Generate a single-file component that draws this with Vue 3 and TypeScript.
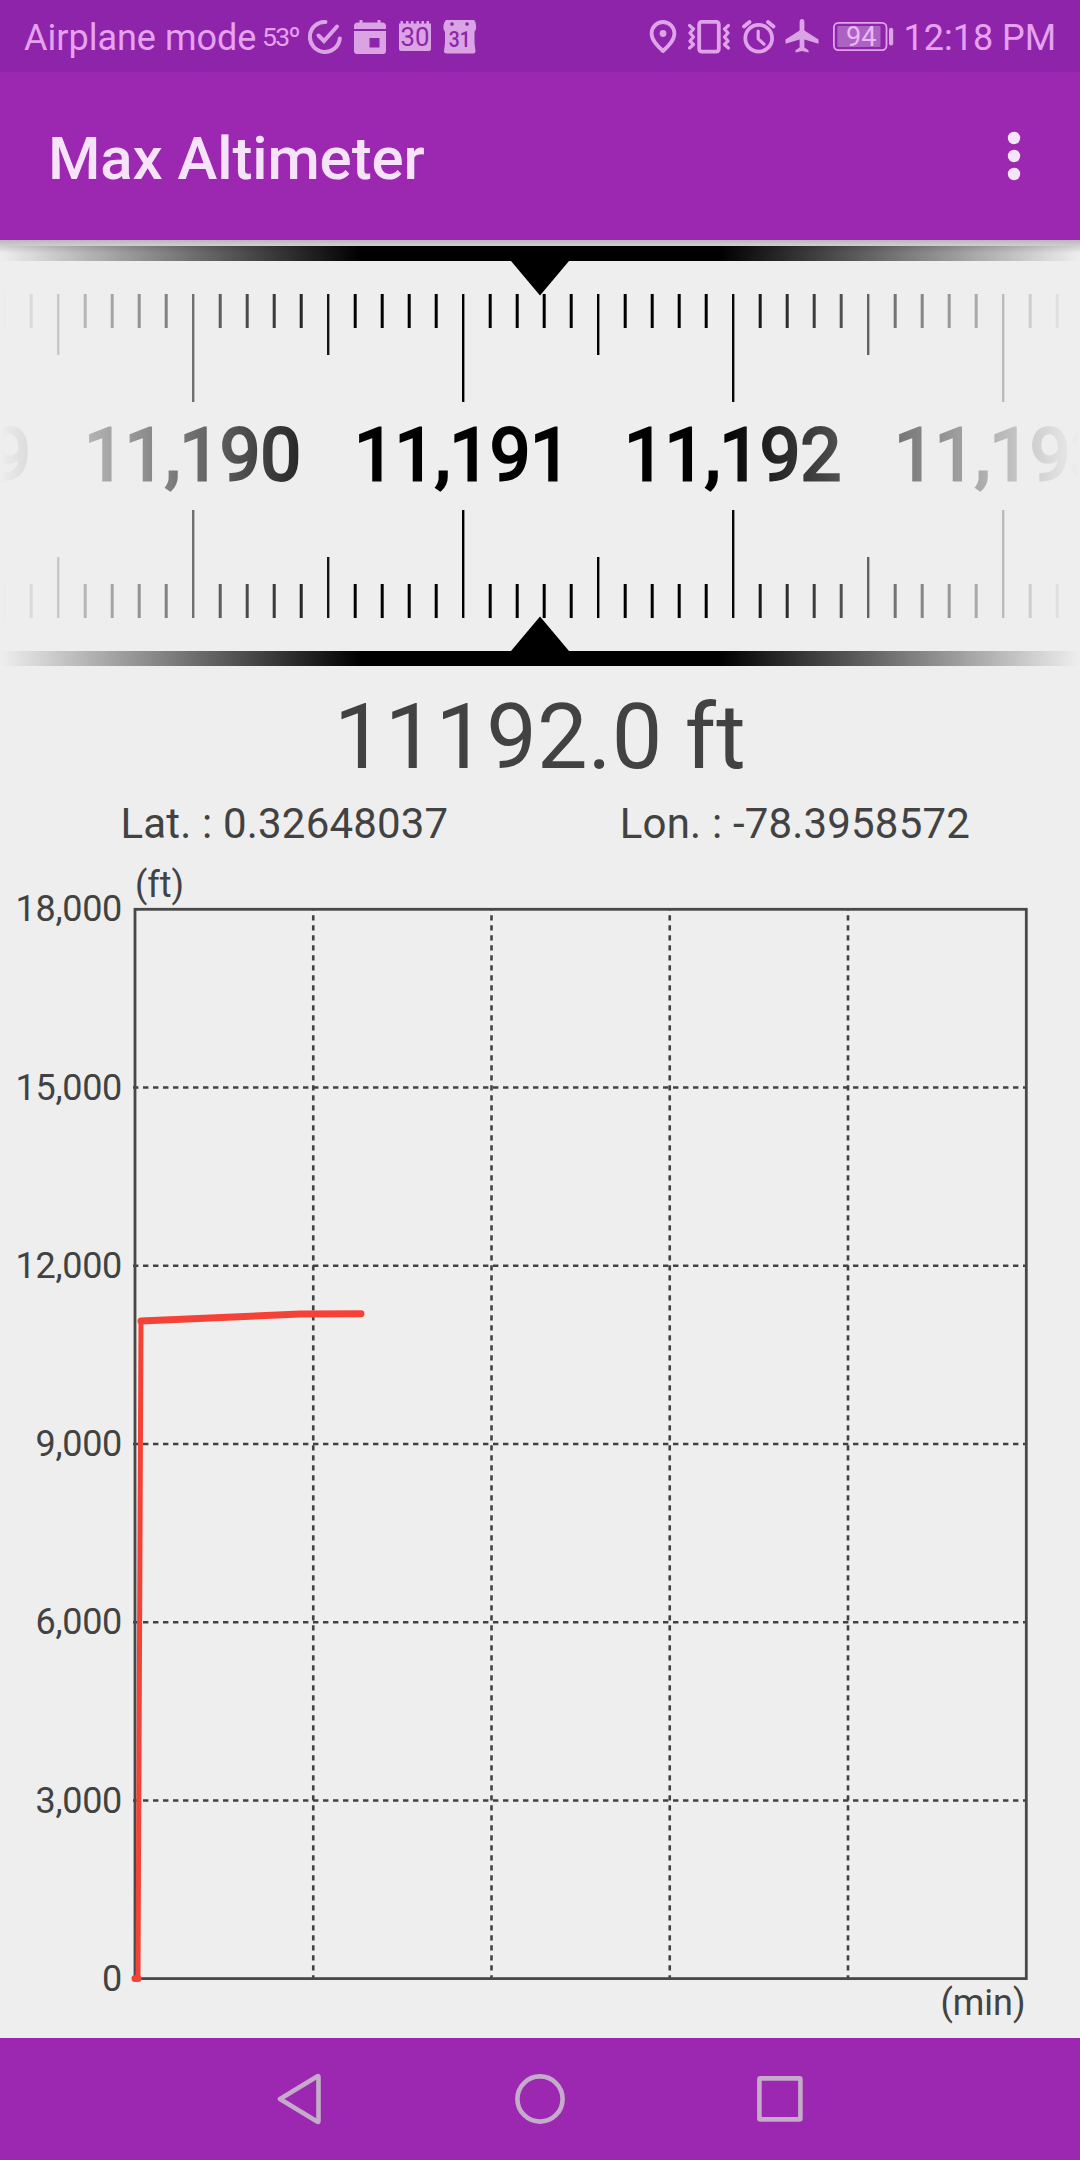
<script setup lang="ts">
interface Tick {
  x: number
  length: number
  width: number
}

const TICK_SPACING = 27
const FIRST_TICK = 4.2

// Every tenth tick is a whole foot, every fifth a half.
const ticks: Tick[] = Array.from({ length: 40 }, (_, i) => {
  const step = (i + 3) % 10
  const length = step === 0 ? 108 : step === 5 ? 61 : 34
  return { x: FIRST_TICK + i * TICK_SPACING, length, width: step % 5 === 0 ? 2.4 : 3 }
})

const marks = [11189, 11190, 11191, 11192, 11193].map((value, i) => ({
  label: value.toLocaleString('en-US'),
  x: -77.2 + i * 270,
}))

const CHART = { left: 135, right: 1026.3, top: 39.3, bottom: 1108.6 }
const STEP = 178.25

const rows = [18000, 15000, 12000, 9000, 6000, 3000, 0].map((value, i) => ({
  label: value.toLocaleString('en-US'),
  y: CHART.top + i * STEP,
}))
const columns = [1, 2, 3, 4].map((i) => CHART.left + i * STEP)
</script>

<template>
  <div class="screen">
    <header class="status">
      <span class="carrier">Airplane mode</span>
      <span class="temp">53º</span>
      <svg class="check" width="34" height="34" viewBox="0 0 34 34">
        <path d="M17.5 2 A15 15 0 1 0 31.8 18.5" />
        <path d="M10.5 15.5 L16 21 L29 6.5" />
      </svg>
      <svg class="cal" width="32" height="34" viewBox="0 0 32 34">
        <path d="M3 2.5H5.5V0H8.5V2.5H23.5V0H26.5V2.5H29Q32 3 32 6V9H0V6Q0 3 3 2.5Z" />
        <path fill-rule="evenodd" d="M0 11H32V31Q32 34 29 34H3Q0 34 0 31ZM15.5 18V27.5H25.5V18Z" />
      </svg>
      <svg class="cal30" width="32" height="34" viewBox="0 0 32 34">
        <path d="M0 3.5 H1.5V1H4V3.5H7V1H9.5V3.5H12V1H14.5V3.5H17.5V1H20V3.5H22.5V1H25V3.5H27.5V1H30V3.5H32V29Q32 31 30 31H2Q0 31 0 29Z" />
        <text x="16" y="26" text-anchor="middle" font-size="25" textLength="29" lengthAdjust="spacingAndGlyphs">30</text>
      </svg>
      <svg class="cal31" width="34" height="34" viewBox="0 0 34 34">
        <path fill-rule="evenodd" d="M3 0H31Q33 2 33 5V9L31.5 12V23L32.5 31Q32.5 33.5 30 33.5H4Q1 33.5 1 31L2 23V12L.5 9V5Q1 2 3 0ZM9 2.2A1.8 1.8 0 1 0 9.1 2.2ZM24 2.2A1.8 1.8 0 1 0 24.1 2.2Z" />
        <text x="16.7" y="26.8" text-anchor="middle" font-size="21.5" font-weight="500" textLength="22" lengthAdjust="spacingAndGlyphs">31</text>
      </svg>

      <svg class="pin" width="28" height="34" viewBox="0 0 28 34">
        <path class="line" d="M14 2A11.4 11.4 0 0 0 2.6 13.4C2.6 20 8 25.5 14 31C20 25.5 25.4 20 25.4 13.4A11.4 11.4 0 0 0 14 2Z" />
        <circle cx="14" cy="13.5" r="3.4" />
      </svg>
      <svg class="vibrate" width="42" height="34" viewBox="0 0 42 34">
        <rect class="line" x="11.2" y="1.8" width="19.6" height="29.8" rx="2.5" />
        <path class="line thin" d="M1.6 5.5 L5.5 9 L2 13 L5.5 17 L2 21 L5.5 24.5 L1.6 28M40.4 5.5 L36.5 9 L40 13 L36.5 17 L40 21 L36.5 24.5 L40.4 28" />
      </svg>
      <svg class="alarm" width="34" height="34" viewBox="0 0 34 34">
        <circle class="line" cx="16.7" cy="18.2" r="13.4" />
        <path class="line" d="M2 6.5 L7.5 2 M31.5 6.5 L26 2" />
        <path class="line thin" d="M16.2 11V18.8L22 24.2" />
      </svg>
      <svg class="plane" width="34" height="34" viewBox="0 0 34 34">
        <path d="M17 0C18.8 0 19.4 1.5 19.4 3V11.5L33.5 20.5V24.8L19.4 20.5V28.5L23.5 31.2V33.4L17 32L10.5 33.4V31.2L14.6 28.5V20.5L.5 24.8V20.5L14.6 11.5V3C14.6 1.5 15.2 0 17 0Z" />
      </svg>
      <svg class="battery" width="61" height="30" viewBox="0 0 61 30">
        <rect class="line" x=".9" y=".9" width="52.6" height="27.2" rx="4.5" stroke-width="1.8" />
        <rect class="charge" x="4.3" y="4" width="43.2" height="21" rx="1" />
        <rect x="56" y="5.8" width="4.2" height="17.6" rx="2" />
        <text x="28.2" y="24" text-anchor="middle" font-size="27">94</text>
      </svg>
      <span class="clock">12:18 PM</span>
    </header>

    <div class="appbar">
      <h1>Max Altimeter</h1>
      <svg width="14" height="50" viewBox="0 0 14 50">
        <circle cx="7" cy="7" r="6.2" />
        <circle cx="7" cy="25" r="6.2" />
        <circle cx="7" cy="43" r="6.2" />
      </svg>
    </div>

    <main>
      <svg class="gauge" width="1080" height="430" viewBox="0 240 1080 430">
        <defs>
          <linearGradient id="fade" gradientUnits="userSpaceOnUse" x1="0" y1="0" x2="1080" y2="0">
            <stop offset="0" stop-color="#000" stop-opacity="0" />
            <stop offset=".3333" stop-color="#000" />
            <stop offset=".6667" stop-color="#000" />
            <stop offset="1" stop-color="#000" stop-opacity="0" />
          </linearGradient>
          <linearGradient id="reveal" gradientUnits="userSpaceOnUse" x1="0" y1="0" x2="1080" y2="0">
            <stop offset="0" stop-color="#fff" stop-opacity="0" />
            <stop offset=".3333" stop-color="#fff" />
            <stop offset=".6667" stop-color="#fff" />
            <stop offset="1" stop-color="#fff" stop-opacity="0" />
          </linearGradient>
          <mask id="edges" maskUnits="userSpaceOnUse" x="0" y="400" width="1080" height="120">
            <rect x="0" y="400" width="1080" height="120" fill="url(#reveal)" />
          </mask>
          <linearGradient id="shade" x1="0" y1="0" x2="0" y2="1">
            <stop offset="0" stop-color="#bcb7be" />
            <stop offset=".4" stop-color="#cecacf" />
            <stop offset="1" stop-color="#eeeeee" />
          </linearGradient>
        </defs>
        <rect x="0" y="240" width="1080" height="13" fill="url(#shade)" />
        <g fill="url(#fade)">
          <rect x="0" y="246" width="1080" height="15" />
          <rect x="0" y="651" width="1080" height="15" />
          <rect v-for="t in ticks" :key="'t' + t.x" :x="t.x - t.width / 2" y="294" :width="t.width" :height="t.length" />
          <rect v-for="t in ticks" :key="'b' + t.x" :x="t.x - t.width / 2" :y="618 - t.length" :width="t.width" :height="t.length" />
        </g>
        <g mask="url(#edges)">
          <text
            v-for="m in marks"
            :key="m.label"
            :x="m.x"
            y="480.2"
            text-anchor="middle"
            class="mark"
          >{{ m.label }}</text>
        </g>
        <path d="M511 261L540 295.5L569 261ZM511 651L540 616.5L569 651Z" />
      </svg>

      <p class="altitude">11192.0 ft</p>
      <div class="coords">
        <span>Lat. : 0.32648037</span>
        <span>Lon. : -78.3958572</span>
      </div>

      <svg class="chart" width="1080" height="1178" viewBox="0 -10 1080 1178">
        <g class="grid">
          <line v-for="r in rows.slice(1, 6)" :key="r.label" x1="133" :y1="r.y" :x2="CHART.right" :y2="r.y" />
          <line v-for="x in columns" :key="x" class="vertical" :x1="x" :y1="CHART.top" :x2="x" :y2="CHART.bottom" />
        </g>
        <rect
          class="frame"
          :x="CHART.left"
          :y="CHART.top"
          :width="CHART.right - CHART.left"
          :height="CHART.bottom - CHART.top"
        />
        <g class="labels">
          <text v-for="r in rows" :key="r.label" class="tick" x="122" :y="r.y + 12" text-anchor="end">{{ r.label }}</text>
          <text x="135" y="26.5">(ft)</text>
          <text x="1025.5" y="1145" text-anchor="end">(min)</text>
        </g>
        <g class="trace">
          <path d="M138 1108.6L141 451" stroke-width="5" />
          <path d="M135 1108.6H138M141 451L300 444.1L361 443.7" stroke-width="7" />
        </g>
      </svg>
    </main>

    <nav>
      <svg width="46" height="54" viewBox="0 0 46 54">
        <path d="M3 27L40.5 4.3Q41.5 3.8 41.5 5V49Q41.5 50.2 40.5 49.7Z" />
      </svg>
      <svg width="54" height="54" viewBox="0 0 54 54">
        <circle cx="28" cy="27" r="22.6" />
      </svg>
      <svg width="50" height="54" viewBox="0 0 50 54">
        <rect x="4.4" y="6.4" width="41" height="41" rx="1" />
      </svg>
    </nav>
  </div>
</template>

<style>
body {
  background: #eeeeee;
}
</style>

<style scoped>
.screen {
  width: 1080px;
  height: 2160px;
  display: flex;
  flex-direction: column;
  overflow: hidden;
  background: #eeeeee;
  color: #424242;
  font-family: Roboto, "Noto Sans", sans-serif;
}
.screen svg {
  display: block;
  flex: none;
}
.status {
  height: 72px;
  flex: none;
  display: flex;
  align-items: flex-start;
  background: #8e24aa;
  color: #e6a1ef;
  white-space: nowrap;
}
.status svg {
  fill: #d9a3e4;
  margin-top: 20px;
}
.carrier {
  width: 238px;
  margin-left: 24px;
  font-size: 36px;
  line-height: 42px;
  margin-top: 16.5px;
}
.temp {
  width: 45.5px;
  font-size: 26.5px;
  line-height: 30px;
  margin-top: 22px;
  letter-spacing: -1.7px;
}
.status .check {
  fill: none;
  stroke: #d9a3e4;
  stroke-width: 4;
  stroke-linecap: round;
}
.status .cal {
  margin: 19.5px 0 0 12.5px;
}
.status .cal30 {
  margin-left: 13px;
}
.status .cal31 {
  margin-left: 12px;
}
.cal30 text,
.cal31 text {
  fill: #8e24aa;
}
.status .line {
  fill: none;
  stroke: #e0a3ea;
  stroke-width: 3.8;
  stroke-linecap: round;
  stroke-linejoin: round;
}
.status .thin {
  stroke-width: 3.2;
}
.status .pin {
  margin-left: 172px;
}
.status .vibrate {
  margin-left: 11px;
}
.status .alarm {
  margin-left: 12px;
}
.status .plane {
  margin: 19px 0 0 9px;
}
.status .battery {
  margin: 22px 0 0 13.5px;
}
.battery rect.line {
  stroke-width: 1.8;
}
.battery .charge {
  fill: #ad62c3;
}
.battery text {
  fill: #ecb8f4;
}
.clock {
  margin: 16.5px 0 0 10px;
  font-size: 36px;
  line-height: 42px;
}
.appbar {
  height: 168px;
  flex: none;
  box-sizing: border-box;
  display: flex;
  align-items: center;
  justify-content: space-between;
  padding: 0 59px 0 48px;
  background: #9c27b0;
}
.appbar h1 {
  margin: 5px 0 0;
  font-size: 60px;
  font-weight: 500;
  line-height: 70px;
  letter-spacing: -0.1px;
  color: #f6e3fa;
}
.appbar svg {
  fill: #f5e4f7;
}
main {
  height: 1798px;
  flex: none;
}
.mark {
  font-size: 72px;
  fill: #000;
  stroke: #000;
  stroke-width: 2.8;
}
.altitude {
  margin: 0;
  padding-top: 15px;
  font-size: 90px;
  line-height: 106px;
  letter-spacing: 0.15px;
  text-align: center;
}
.coords {
  display: flex;
  justify-content: space-between;
  height: 69px;
  box-sizing: border-box;
  padding: 8px 110px 0 120.5px;
  font-size: 42px;
  line-height: 50px;
  letter-spacing: 0.18px;
}
.grid {
  stroke: #424242;
  stroke-width: 2.6;
  stroke-dasharray: 5.4 4.6;
}
.grid .vertical {
  stroke-dashoffset: 4.1;
}
.frame {
  fill: none;
  stroke: #484848;
  stroke-width: 2.8;
}
.labels {
  fill: #424242;
  font-size: 36px;
}
.labels .tick {
  letter-spacing: -0.3px;
}
.trace {
  fill: none;
  stroke: #f44336;
  stroke-linecap: round;
  stroke-linejoin: round;
}
nav {
  height: 122px;
  flex: none;
  box-sizing: border-box;
  display: flex;
  align-items: flex-start;
  justify-content: space-between;
  padding: 34px 275px 0 277px;
  background: #9c27b0;
}
nav svg {
  fill: none;
  stroke: #c3abc9;
  stroke-width: 4.6;
  stroke-linejoin: round;
}
</style>
